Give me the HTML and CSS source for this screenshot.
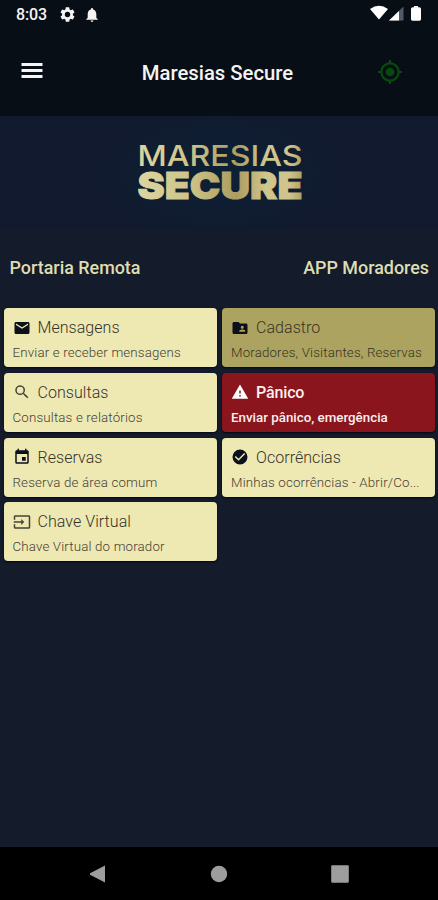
FILE: index.html
```html
<!DOCTYPE html>
<html lang="pt-BR">
<head>
<meta charset="utf-8">
<title>Maresias Secure</title>
<link rel="stylesheet" href="styles.css">
</head>
<body>
<div class="app">
  <header class="top">
    <div class="status">
      <span class="clock">8:03</span>
      <svg class="gear" viewBox="2 2 20 20"><path d="M19.14 12.94c.04-.3.06-.61.06-.94 0-.32-.02-.64-.07-.94l2.03-1.58c.18-.14.23-.41.12-.61l-1.92-3.32c-.12-.22-.37-.29-.59-.22l-2.39.96c-.5-.38-1.03-.7-1.62-.94l-.36-2.54c-.04-.24-.24-.41-.48-.41h-3.84c-.24 0-.43.17-.47.41l-.36 2.54c-.59.24-1.13.57-1.62.94l-2.39-.96c-.22-.08-.47 0-.59.22L2.74 8.87c-.12.21-.08.47.12.61l2.03 1.58c-.05.3-.09.63-.09.94s.02.64.07.94l-2.03 1.58c-.18.14-.23.41-.12.61l1.92 3.32c.12.22.37.29.59.22l2.39-.96c.5.38 1.03.7 1.62.94l.36 2.54c.05.24.24.41.48.41h3.84c.24 0 .44-.17.47-.41l.36-2.54c.59-.24 1.13-.56 1.62-.94l2.39.96c.22.08.47 0 .59-.22l1.92-3.32c.12-.22.07-.47-.12-.61l-2.01-1.58zM12 15.6A3.6 3.6 0 1 1 12 8.4a3.6 3.6 0 0 1 0 7.2z"/></svg>
      <svg class="bell" viewBox="4 2.5 16 19.5"><path d="M12 22c1.1 0 2-.9 2-2h-4c0 1.1.9 2 2 2zm6-6v-5c0-3.07-1.64-5.64-4.5-6.32V4a1.5 1.5 0 0 0-3 0v.68C7.63 5.36 6 7.92 6 11v5l-2 2v1h16v-1l-2-2z"/></svg>
      <svg class="signals" viewBox="0 0 54 18"><path d="M0 4Q9-2.500 18 4L9 14.500Z"/><path d="M19 15.500 33.500 1.500V15.500Z" fill="#555a62"/><path d="M19 15.500 29 6V15.500Z"/><path d="M44 1h4v1.300h1.200q1.800 0 1.800 1.800v10.200q0 1.400-1.400 1.400h-7.200q-1.400 0-1.400-1.400V4.100q0-1.800 1.800-1.800H44Z"/></svg>
    </div>
    <div class="toolbar">
      <svg class="menu" viewBox="0 0 21 15"><path d="M0 0h21v3H0zM0 6h21v3H0zM0 12h21v3H0z"/></svg>
      <h1>Maresias Secure</h1>
      <svg class="gps" viewBox="0 0 24 24"><path d="M12 8a4 4 0 1 0 0 8 4 4 0 0 0 0-8zm8.940 3A8.990 8.990 0 0 0 13 3.060V1h-2v2.060A8.990 8.990 0 0 0 3.060 11H1v2h2.060A8.990 8.990 0 0 0 11 20.940V23h2v-2.060A8.990 8.990 0 0 0 20.940 13H23v-2h-2.060zM12 19a7 7 0 1 1 0-14 7 7 0 0 1 0 14z"/></svg>
    </div>
  </header>
  <div class="banner">
    <svg class="logo" viewBox="0 0 180 70">
      <defs><linearGradient id="gold" gradientUnits="userSpaceOnUse" x1="8" y1="0" x2="172" y2="0"><stop offset="0" stop-color="#ddd5a0"/><stop offset=".3" stop-color="#cfc58a"/><stop offset=".6" stop-color="#ac9c60"/><stop offset=".78" stop-color="#d0c68c"/><stop offset=".92" stop-color="#cfc58c"/><stop offset="1" stop-color="#b3a364"/></linearGradient></defs>
      <text class="logo-thin" x="7.500" y="30.500" textLength="165" lengthAdjust="spacingAndGlyphs">MARESIAS</text>
      <text class="logo-bold" x="7.500" y="64" textLength="165" lengthAdjust="spacingAndGlyphs">SECURE</text>
    </svg>
  </div>
  <div class="headings"><h2>Portaria Remota</h2><h2>APP Moradores</h2></div>
  <main class="cards">
    <div class="card"><div class="head"><svg viewBox="0 0 24 24"><path d="M20 4H4c-1.100 0-2 .9-2 2v12c0 1.100.9 2 2 2h16c1.100 0 2-.9 2-2V6c0-1.100-.9-2-2-2zm0 4-8 5-8-5V6l8 5 8-5v2z"/></svg><span class="name">Mensagens</span></div><p>Enviar e receber mensagens</p></div>
    <div class="card olive"><div class="head"><svg viewBox="0 0 24 24"><path d="M20 6h-8l-2-2H4c-1.100 0-2 .9-2 2v12c0 1.100.9 2 2 2h16c1.100 0 2-.9 2-2V8c0-1.100-.9-2-2-2zm-5 3a2 2 0 1 1 0 4 2 2 0 0 1 0-4zm4 8h-8v-1c0-1.330 2.670-2 4-2s4 .67 4 2v1z"/></svg><span class="name">Cadastro</span></div><p>Moradores, Visitantes, Reservas</p></div>
    <div class="card"><div class="head"><svg class="soft" viewBox="0 0 24 24"><path d="M15.500 14h-.79l-.28-.27A6.500 6.500 0 1 0 13.730 14.430l.27.28v.79l5 4.990L20.490 19l-4.990-5zm-6 0a4.500 4.500 0 1 1 0-9 4.500 4.500 0 0 1 0 9z"/></svg><span class="name">Consultas</span></div><p>Consultas e relatórios</p></div>
    <div class="card red"><div class="head"><svg viewBox="0 0 24 24"><path d="M1 21h22L12 2 1 21zm12-3h-2v-2h2v2zm0-4h-2v-4h2v4z"/></svg><span class="name">Pânico</span></div><p>Enviar pânico, emergência</p></div>
    <div class="card"><div class="head"><svg viewBox="0 0 24 24"><path d="M17 12h-5v5h5v-5zM16 1v2H8V1H6v2H5c-1.110 0-2 .9-2 2v14a2 2 0 0 0 2 2h14c1.100 0 2-.9 2-2V5c0-1.100-.9-2-2-2h-1V1h-2zm3 18H5V8h14v11z"/></svg><span class="name">Reservas</span></div><p>Reserva de área comum</p></div>
    <div class="card"><div class="head"><svg viewBox="0 0 24 24"><path d="M12 2a10 10 0 1 0 0 20 10 10 0 0 0 0-20zm-2 15-5-5 1.410-1.410L10 14.170l7.590-7.590L19 8l-9 9z"/></svg><span class="name">Ocorrências</span></div><p>Minhas ocorrências - Abrir/Co...</p></div>
    <div class="card"><div class="head"><svg class="soft" viewBox="0 0 24 24"><path d="M21 3H3c-1.100 0-2 .9-2 2v4h2V5h18v14H3v-4H1v4c0 1.100.9 2 2 2h18c1.100 0 2-.9 2-2V5c0-1.100-.9-2-2-2zM11 16l4-4-4-4v3H1v2h10v3z"/></svg><span class="name">Chave Virtual</span></div><p>Chave Virtual do morador</p></div>
  </main>
  <nav class="nav">
    <svg viewBox="0 0 18 18"><path d="M16 .5v17L1 9.800V8.200Z"/></svg>
    <svg viewBox="0 0 18 18"><circle cx="9" cy="9" r="8.200"/></svg>
    <svg viewBox="0 0 18 18"><rect x=".2" y=".3" width="17.600" height="17.400" rx="1"/></svg>
  </nav>
</div>
</body>
</html>
```
FILE: styles.css
```css
* { box-sizing: border-box; }
body { margin: 0; font-family: Roboto, sans-serif; background: #141b2b; }
svg { display: block; flex: none; fill: currentColor; }
h1, h2, p { margin: 0; white-space: nowrap; }
.app { width: 438px; height: 900px; display: flex; flex-direction: column; }
.top { height: 116px; background: #080e16; color: #f4f4f4; }
.status { height: 29px; display: flex; align-items: center; padding: 0 14px 0 16px; }
.clock { font-size: 16px; font-weight: 500; letter-spacing: -.1px; width: 44px; }
.gear { width: 15px; height: 15px; }
.bell { width: 12px; height: 14px; margin-left: 11px; }
.signals { width: 54px; height: 18px; margin-left: auto; margin-top: -1px; color: #fff; }
.toolbar { height: 87px; padding: 0 35px 0 21px; display: flex; align-items: center; justify-content: space-between; }
.menu { width: 22px; height: 15px; margin-top: -4px; }
h1 { font-size: 20.3px; font-weight: 500; line-height: 24px; margin-left: 65px; margin-right: 50px; }
.gps { width: 26px; height: 26px; color: #074a0d; margin-top: -2px; }
.banner { height: 113px; display: flex; justify-content: center; padding-top: 19px; background: radial-gradient(ellipse 125px 65px at 50% 50%, #0c2136, #111a2e); }
.logo { width: 180px; height: 70px; margin-left: 2px; overflow: visible; }
.logo text { fill: url(#gold); }
.logo-thin { font: 500 29px Inter, sans-serif; }
.logo-bold { font: 900 37.5px Inter, sans-serif; stroke: url(#gold); stroke-width: 1px; }
.headings { height: 79px; display: flex; justify-content: space-between; align-items: center; padding: 0 9px 1px 9.5px; color: #dfddb0; }
h2 { font-size: 17.9px; font-weight: 500; line-height: 22px; }
.cards { flex: 1; display: grid; grid-template-columns: 213px 213px; grid-auto-rows: 59px; gap: 5.8px 5.5px; padding: 0 0 0 3.5px; align-content: start; }
.card { background: #eee8b3; border-radius: 4px; padding: 9px 0 0 9px; color: #0b101b; box-shadow: 0 1px 2px #030611; }
.head { height: 21px; display: flex; align-items: center; gap: 7px; }
.head svg { width: 18px; height: 18px; }
.head .soft { color: #454433; }
.name { font-size: 16px; line-height: 21px; color: #35332a; letter-spacing: .05px; font-weight: 350; }
p { font-size: 13.3px; line-height: 16px; margin-top: 7px; color: #444235; font-weight: 350; letter-spacing: .16px; }
.olive { background: #aca361; }
.olive .name, .olive p { color: #37331f; }
.red { background: #8b151c; color: #fff; }
.red .name, .red p { color: #faf0f0; font-weight: 500; }
.red .name { letter-spacing: -.15px; }
.red p { letter-spacing: .02px; }
.nav { height: 53px; background: #000; color: #9d9d9d; display: flex; align-items: center; justify-content: space-between; padding: 0 89px; }
.nav svg { width: 18px; height: 18px; }
```
